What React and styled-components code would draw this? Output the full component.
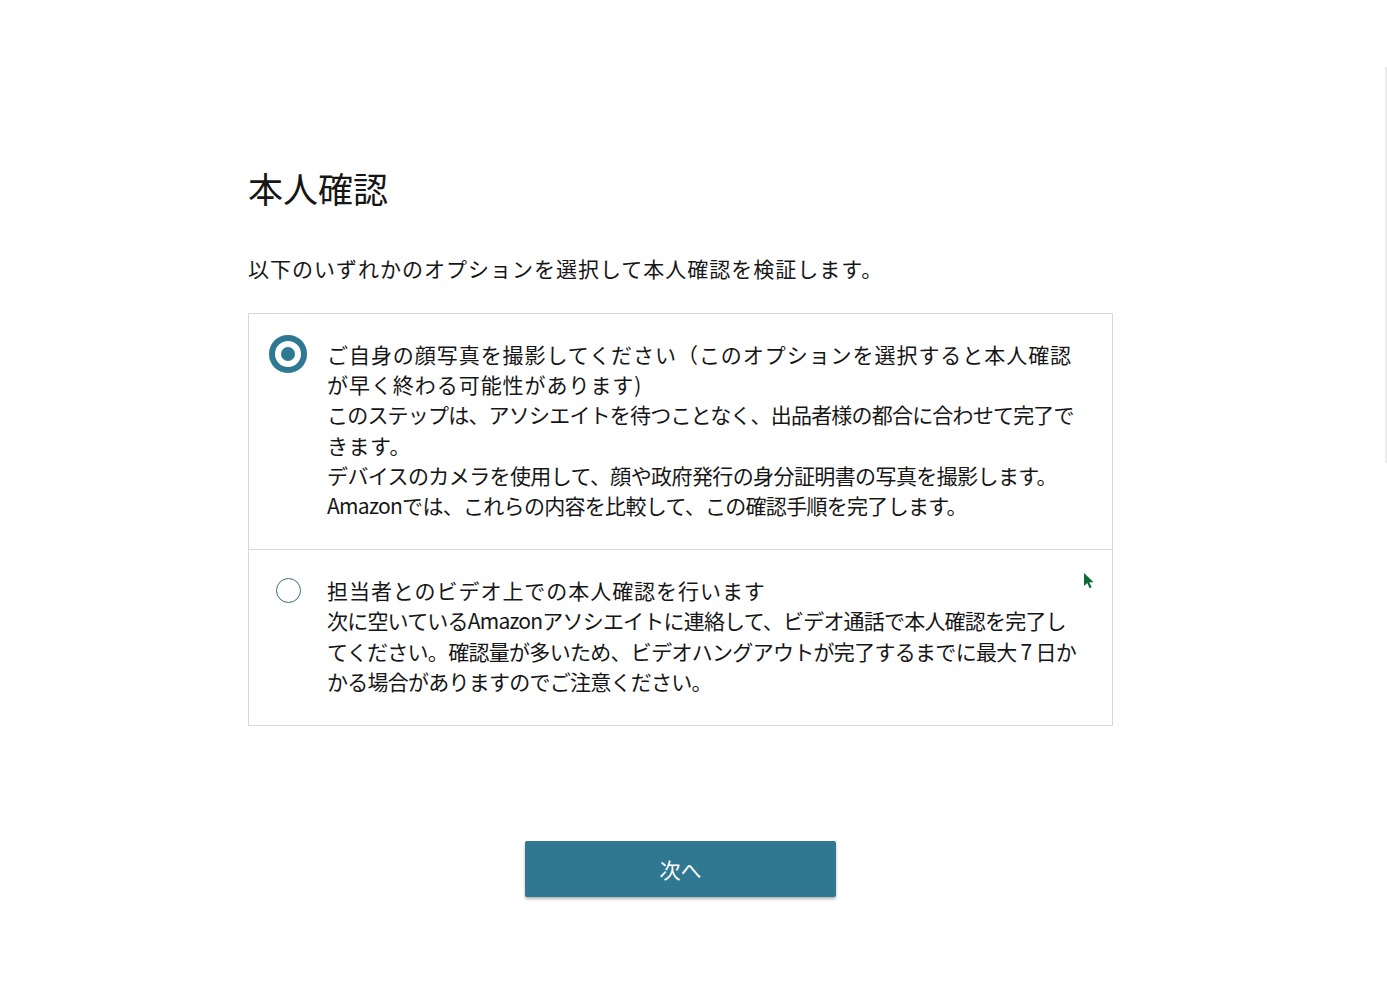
import React, { useState } from "react"
import styled, { createGlobalStyle } from "styled-components"

const GlobalStyle = createGlobalStyle`
  html, body {
    margin: 0;
    background: #fff;
  }
  body {
    font-family: "Noto Sans CJK JP", "Noto Sans", sans-serif;
    color: #161616;
  }
`

const Page = styled.main`
  position: relative;
  min-height: 996px;
  padding: 161px 0 0 248px;
  box-sizing: border-box;
`

const Content = styled.div`
  width: 865px;
  display: flex;
  flex-direction: column;
`

const Title = styled.h1`
  margin: 0;
  font-size: 35px;
  font-weight: 400;
  line-height: 54px;
`

const Lead = styled.p`
  margin: 38px 0 0;
  font-size: 21px;
  line-height: 30px;
  letter-spacing: 1px;
`

const Card = styled.div`
  margin-top: 30px;
  border: 1px solid #d5d9d9;
  display: flex;
  flex-direction: column;
`

const Option = styled.label`
  position: relative;
  display: grid;
  grid-template-columns: 78px 1fr;
  padding: 25px 28px 29px 0;
  cursor: pointer;
  & + & {
    border-top: 1px solid #d5d9d9;
  }
`

const RadioSlot = styled.span`
  display: flex;
  justify-content: center;
  height: 30px;
  align-items: center;
`

const Radio = styled.span`
  box-sizing: border-box;
  border-radius: 50%;
  display: block;
  ${(p) =>
    p.$checked
      ? `
    width: 38px;
    height: 38px;
    background: #2f7891;
    box-shadow: inset 0 0 0 6px #2f7891, inset 0 0 0 12px #fff;
  `
      : `
    width: 25px;
    height: 25px;
    border: 1.5px solid #3c6e80;
    background: #fff;
  `}
`

const Body = styled.span`
  font-size: 21px;
  line-height: 30.2px;
`

const Line = styled.span`
  display: block;
  white-space: nowrap;
  letter-spacing: ${(p) => p.$ls}px;
`

const Pointer = styled.svg`
  position: absolute;
  right: 17px;
  top: 22px;
`

const Actions = styled.div`
  display: flex;
  justify-content: center;
  margin-top: 115px;
`

const NextButton = styled.button`
  width: 311px;
  height: 56px;
  border: none;
  border-radius: 2px;
  background: #307891;
  color: #fff;
  font-family: "Noto Sans CJK JP", sans-serif;
  font-size: 21px;
  box-shadow: 0 2px 3px rgba(0, 0, 0, 0.3);
  cursor: pointer;
`

const ScrollTrack = styled.div`
  position: fixed;
  right: 0;
  top: 67px;
  width: 2px;
  height: 396px;
  background: #ececec;
`

const options = [
  {
    id: "photo",
    lines: [
      { t: "ご自身の顔写真を撮影してください（このオプションを選択すると本人確認", ls: 0.95 },
      { t: "が早く終わる可能性があります)", ls: 0.95 },
      { t: "このステップは、アソシエイトを待つことなく、出品者様の都合に合わせて完了で", ls: -0.8 },
      { t: "きます。", ls: 0.5 },
      { t: "デバイスのカメラを使用して、顔や政府発行の身分証明書の写真を撮影します。", ls: -0.6 },
      { t: "Amazonでは、これらの内容を比較して、この確認手順を完了します。", ls: -0.7 },
    ],
  },
  {
    id: "video",
    lines: [
      { t: "担当者とのビデオ上での本人確認を行います", ls: 0.95 },
      { t: "次に空いているAmazonアソシエイトに連絡して、ビデオ通話で本人確認を完了し", ls: -0.8 },
      { t: "てください。確認量が多いため、ビデオハングアウトが完了するまでに最大 7 日か", ls: -0.7 },
      { t: "かる場合がありますのでご注意ください。", ls: -0.75 },
    ],
  },
]

export default function App() {
  const [choice, setChoice] = useState("photo")
  return (
    <>
      <GlobalStyle />
      <Page>
        <Content>
          <Title>本人確認</Title>
          <Lead>以下のいずれかのオプションを選択して本人確認を検証します。</Lead>
          <Card>
            {options.map((o) => (
              <Option key={o.id} onClick={() => setChoice(o.id)}>
                <RadioSlot>
                  <Radio $checked={choice === o.id} />
                </RadioSlot>
                <Body>
                  {o.lines.map((l, i) => (
                    <Line key={i} $ls={l.ls}>{l.t}</Line>
                  ))}
                </Body>
                {o.id === "video" && (
                  <Pointer width="12" height="17" viewBox="0 0 12 17">
                    <path d="M1 1 L1 14 L4.2 11 L6.6 16.2 L8.6 15.3 L6.3 10.3 L10.6 10.3 Z" fill="#0b6b3a" />
                  </Pointer>
                )}
              </Option>
            ))}
          </Card>
          <Actions>
            <NextButton>次へ</NextButton>
          </Actions>
        </Content>
        <ScrollTrack />
      </Page>
    </>
  )
}
